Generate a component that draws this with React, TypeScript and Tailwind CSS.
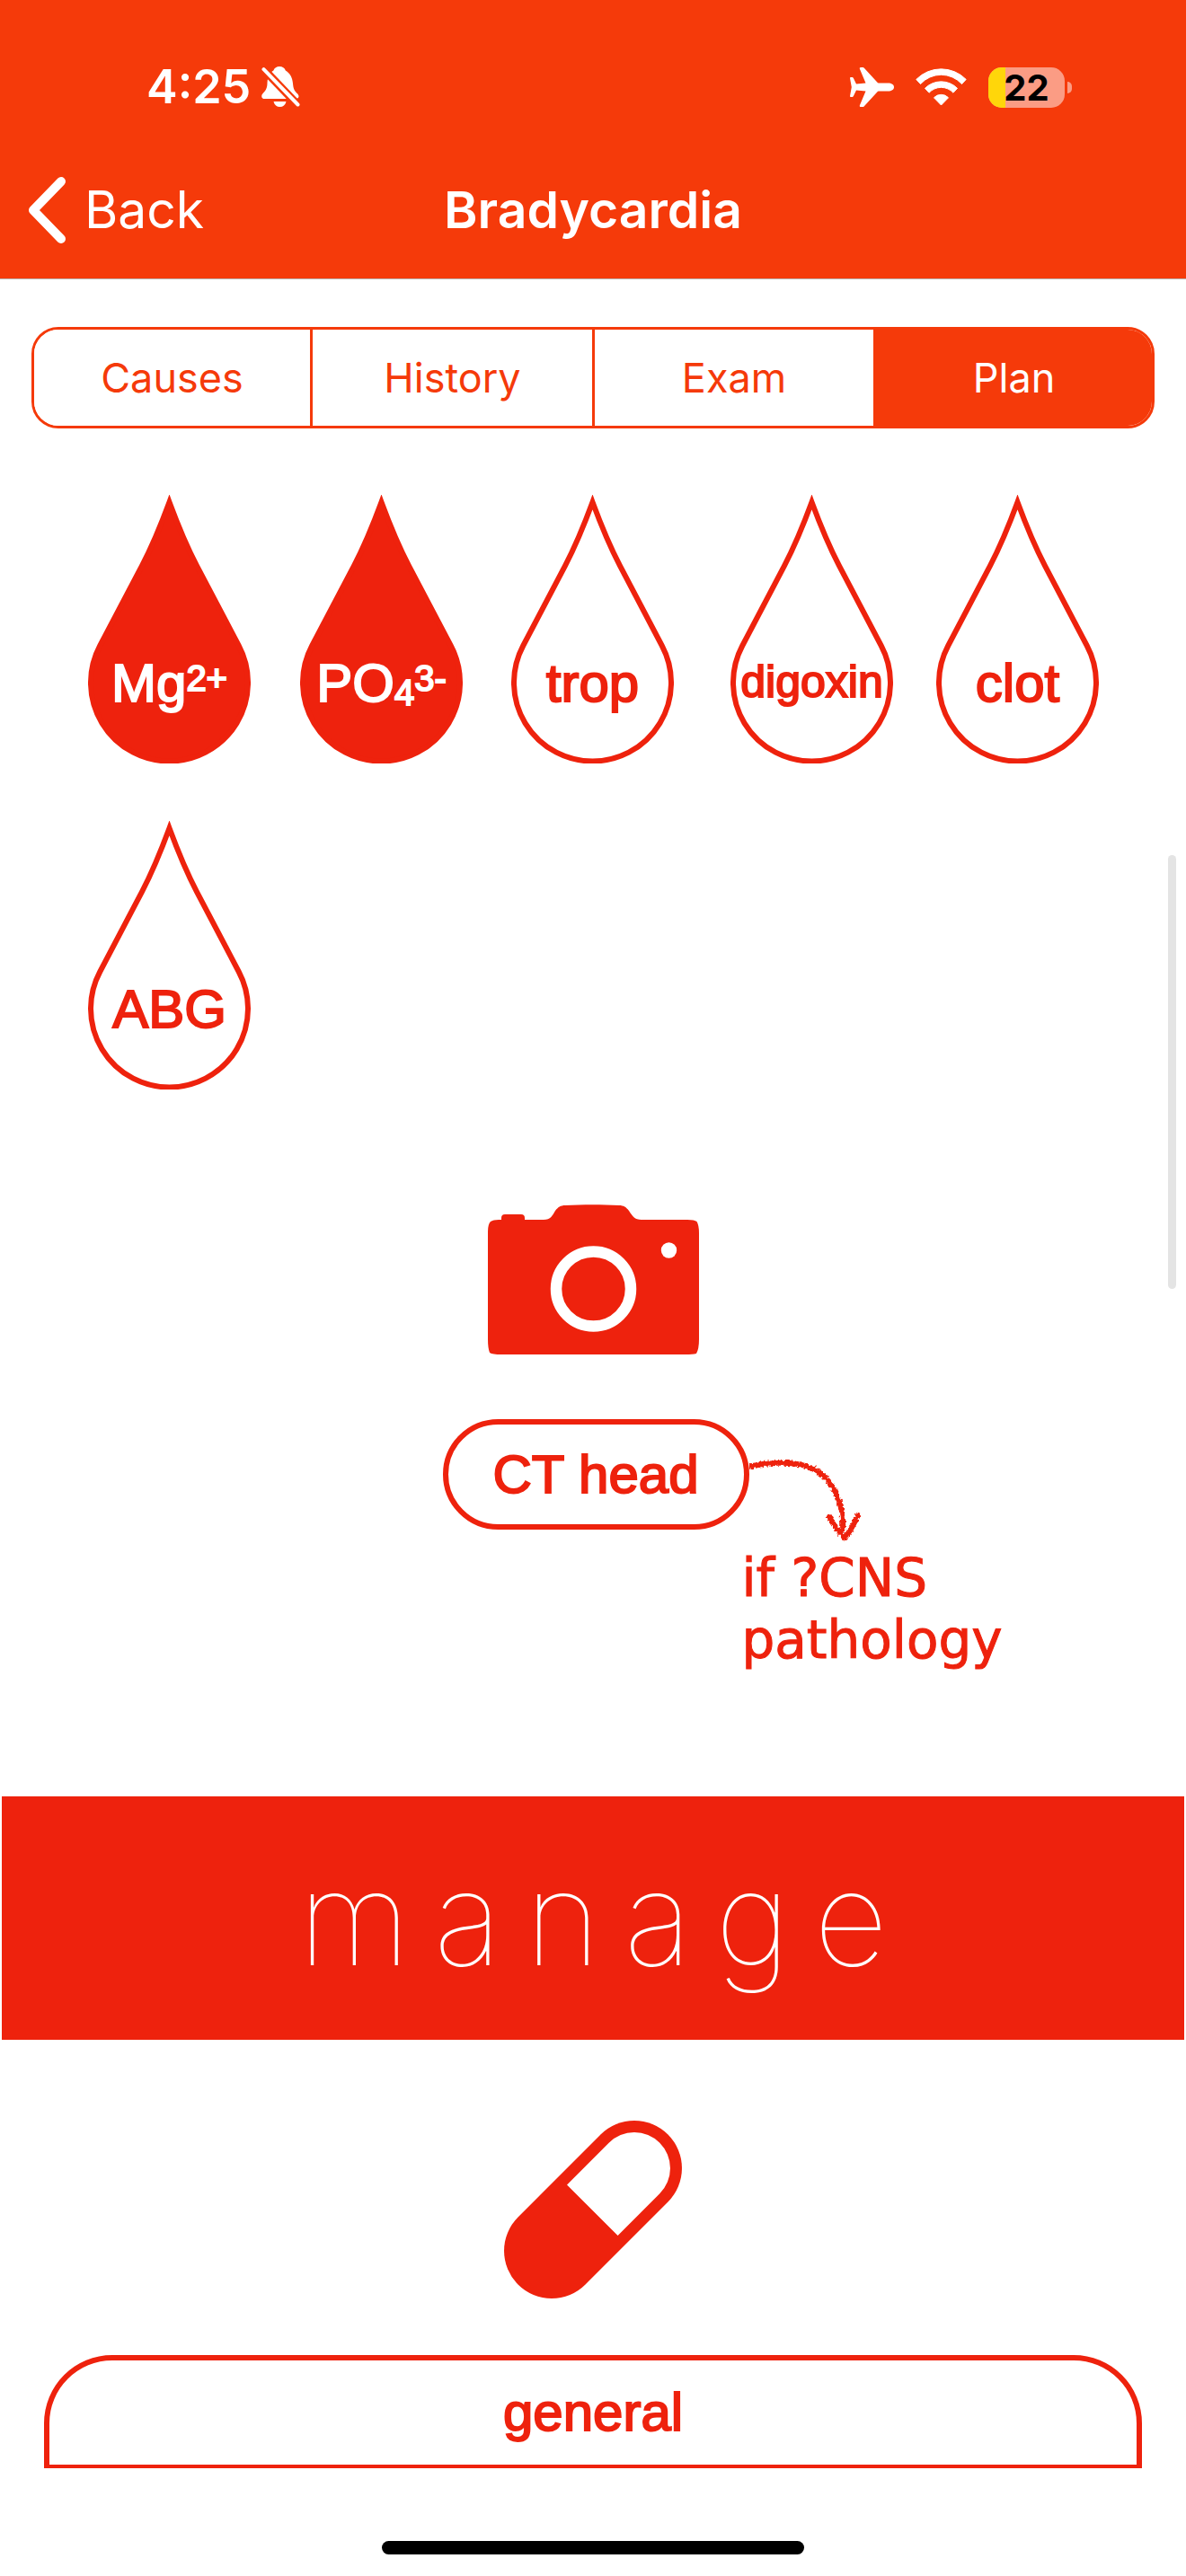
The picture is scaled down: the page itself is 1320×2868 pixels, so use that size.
import { useState, type ReactNode } from "react";

const TABS = ["Causes", "History", "Exam", "Plan"];

type Test = { id: string; label: ReactNode; filled?: boolean; small?: boolean };

const BLOODS: Test[] = [
  {
    id: "magnesium",
    filled: true,
    label: (
      <>
        Mg<span className="relative -top-3 text-[40px]">2+</span>
      </>
    ),
  },
  {
    id: "phosphate",
    filled: true,
    label: (
      <>
        PO<span className="relative top-1 text-[40px]">4</span>
        <span className="relative -top-3 text-[40px]">3-</span>
      </>
    ),
  },
  { id: "troponin", label: "trop" },
  { id: "digoxin", label: "digoxin", small: true },
  { id: "clotting", label: "clot" },
  { id: "abg", label: "ABG" },
];

function BellOff() {
  return (
    <svg width="43" height="46" viewBox="0 0 43 46" aria-label="Silent mode" role="img">
      <path
        fill="#fff"
        d="M20 0c3.4 0 5.800 1.600 6.800 4.600C32 7.500 34.500 13 35 19c.4 6 2 8.500 5.300 11.500 2.400 3 1 5.500-2.300 5.500H3.500c-3.500 0-4.500-3.500-1.500-6.500C5.500 26 6.500 23 6.500 18 7 11.500 9 7 13.400 4.600 14.300 1.600 17 0 20 0Z"
      />
      <path fill="#fff" d="M13.500 39h14c-1 4-3.500 6-7 6s-6-2-7-6Z" />
      <path d="M0 0.500 43 45.500" stroke="#f53a0a" strokeWidth="9" />
      <path d="M2.500 3.200 40.500 42.500" stroke="#fff" strokeWidth="4" strokeLinecap="round" />
    </svg>
  );
}

function Airplane() {
  return (
    <svg width="49" height="44" viewBox="0 0 49 44" aria-label="Airplane mode" role="img">
      <path
        fill="#fff"
        d="M49 22c0 2.800-2.800 4.500-6.500 4.500H32c-.8 0-1.300.4-1.700 1L16.500 42.500c-.8 1-1.500 1.500-2.500 1.500h-2c-1 0-1.500-.7-1.100-1.800L17.500 26.500 7 25.400l-3 6.300c-.4.9-1 1.200-1.800 1.200H.8c-.5 0-.8-.3-.8-.9L1.800 22 0 12c0-.6.300-.9.800-.9h1.400c.8 0 1.400.3 1.800 1.200l3 6.300 10.500-1.100L10.900 1.800C10.500.7 11 0 12 0h2c1 0 1.700.5 2.500 1.500l13.800 15c.4.6.9 1 1.700 1h10.500c3.700 0 6.500 1.700 6.500 4.500Z"
      />
    </svg>
  );
}

function Wifi() {
  return (
    <svg width="57" height="42" viewBox="0 0 57 42" aria-label="Wi-Fi" role="img">
      <g fill="#fff" stroke="#fff" strokeWidth="1" strokeLinejoin="round">
        <path d="M.8 12.400A39 39 0 0 1 56.200 12.400L51.500 17.500A31 31 0 0 0 5.500 17.500Z" />
        <path d="M10.500 22.300A25.500 25.500 0 0 1 46.500 22.300L42 27.200A18.500 18.500 0 0 0 15 27.200Z" />
        <path d="M20.500 32.800A11 11 0 0 1 36.500 32.800L28.500 41Z" />
      </g>
    </svg>
  );
}

function Battery() {
  return (
    <div className="flex items-center gap-[3px]" role="img" aria-label="Battery 22 percent">
      <div className="relative flex h-[45px] w-[85px] items-center justify-center rounded-[15px] bg-[#fb9c84]">
        <div className="absolute inset-y-0 left-0 w-[19px] rounded-l-[15px] bg-[#ffd60a]" />
        <span className="relative text-[40px] leading-[45px] font-bold text-black">22</span>
      </div>
      <div className="h-[13px] w-[5px] rounded-r-full bg-[#fb9c84]" />
    </div>
  );
}

function Drop({ test }: { test: Test }) {
  return (
    <button
      type="button"
      className={test.filled ? "relative w-[181px] text-white" : "relative w-[181px] text-[#ee220d]"}
    >
      <svg width="181" height="299" viewBox="0 0 181 299" aria-hidden="true">
        <path
          d="M90.500 8C97.500 27 108.400 54.800 121 78.800L167.800 168A87.500 87.500 0 1 1 13.200 168L60 78.800C72.600 54.800 83.500 27 90.500 8Z"
          fill={test.filled ? "#ee220d" : "#fff"}
          stroke="#ee220d"
          strokeWidth="6"
          strokeMiterlimit="8"
        />
      </svg>
      <span
        className={
          test.small
            ? "absolute inset-x-0 top-[178px] flex justify-center text-[50px] leading-[60px] whitespace-nowrap [-webkit-text-stroke:2px]"
            : "absolute inset-x-0 top-[180px] flex items-baseline justify-center text-[60px] leading-[60px] whitespace-nowrap [-webkit-text-stroke:2px]"
        }
      >
        {test.label}
      </span>
    </button>
  );
}

function Camera() {
  return (
    <svg width="235" height="167" viewBox="0 0 235 167" aria-hidden="true">
      <path
        fill="#ee220d"
        d="M12 17H15V15Q15 11 19 11H37Q41 11 41 15V17H62C70 17 72 12 75 7 78 3 81 1 86 1 105 0 128 0 146 1 151 1 154 3 157 7 161 13 163 17 171 17H222Q230 17 232.500 19 235 23 235 32V150Q235 161 232 166 228 167 220 167H15Q5 167 2 165 0 160 0 150V30Q0 22 3 19 6 17 12 17Z"
      />
      <circle cx="117.500" cy="94" r="41.500" fill="none" stroke="#fff" strokeWidth="12.500" />
      <circle cx="201.500" cy="51" r="8.700" fill="#fff" />
    </svg>
  );
}

function SketchArrow() {
  return (
    <svg className="ml-2 block" width="130" height="94" viewBox="0 0 130 94" aria-hidden="true">
      <filter id="chalk" x="-10%" y="-10%" width="120%" height="120%">
        <feTurbulence type="fractalNoise" baseFrequency="0.35" numOctaves="2" seed="4" />
        <feDisplacementMap in="SourceGraphic" scale="5" xChannelSelector="R" yChannelSelector="G" />
      </filter>
      <g filter="url(#chalk)" fill="none" stroke="#ee220d" strokeWidth="6" strokeLinecap="round">
        <path d="M-2 8C20 3 45 2 63 7 80 13 92 26 98 41 103 53 105 64 104 78" />
        <path d="M89 64C94 73 99 81 106 87 113 80 116 72 121 62" />
      </g>
    </svg>
  );
}

function Capsule() {
  return (
    <svg width="198" height="198" viewBox="0 0 198 198" aria-hidden="true">
      <g transform="translate(99 99) rotate(-45)">
        <rect x="-118" y="-53" width="236" height="106" rx="53" fill="#ee220d" />
        <path d="M-1 -40H65A40 40 0 0 1 65 40H-1Z" fill="#fff" />
      </g>
    </svg>
  );
}

export default function App() {
  const [tab, setTab] = useState("Plan");

  return (
    <div className="relative flex min-h-screen w-full flex-col bg-white font-['Liberation_Sans',Arial,sans-serif] text-[#ee220d]">
      <header className="border-b border-[#b8b0ae] bg-[#f53a0a] font-[Inter,sans-serif] text-white">
        <div className="flex h-[157px] items-start justify-between pt-[68px] pr-[127px] pl-[163px]">
          <div className="flex h-[58px] items-center gap-3">
            <span className="text-[52px] leading-none font-semibold">4:25</span>
            <BellOff />
          </div>
          <div className="flex h-[58px] items-center gap-6">
            <Airplane />
            <Wifi />
            <Battery />
          </div>
        </div>
        <div className="grid h-[153px] grid-cols-[1fr_auto_1fr] items-center px-[30px]">
          <button type="button" className="flex items-center gap-5 justify-self-start text-[57px] leading-none">
            <svg width="44" height="74" viewBox="0 0 44 74" aria-hidden="true">
              <path
                d="M38 5 7 37 38 69"
                fill="none"
                stroke="#fff"
                strokeWidth="10"
                strokeLinecap="round"
                strokeLinejoin="round"
              />
            </svg>
            Back
          </button>
          <h1 className="text-[57px] leading-none font-semibold">Bradycardia</h1>
        </div>
      </header>

      <main className="flex flex-1 flex-col">
        <div
          role="tablist"
          className="mx-[35px] mt-[53px] grid h-[113px] grid-cols-[310fr_314fr_313fr_307fr] divide-x-[3px] divide-[#f53a0a] overflow-hidden rounded-[30px] border-[3px] border-[#f53a0a] font-[Inter,sans-serif] text-[45px] leading-none"
        >
          {TABS.map((name) => (
            <button
              key={name}
              type="button"
              role="tab"
              aria-selected={tab === name}
              onClick={() => setTab(name)}
              className={tab === name ? "bg-[#f53a0a] text-white" : "bg-white text-[#f53a0a]"}
            >
              {name}
            </button>
          ))}
        </div>

        <section
          aria-label="Blood tests"
          className="mt-[74px] grid grid-cols-[236fr_235fr_244fr_229fr_181fr] gap-y-16 pr-[97px] pl-[98px]"
        >
          {BLOODS.map((test) => (
            <Drop key={test.id} test={test} />
          ))}
        </section>

        <section aria-label="Imaging" className="mt-32 flex flex-col items-center">
          <Camera />
          <div className="mt-[72px] grid w-full grid-cols-[1fr_auto_1fr] items-start pl-[6px]">
            <span />
            <button
              type="button"
              className="h-[123px] w-[341px] rounded-full border-[6px] border-[#ee220d] text-[60px] leading-none [-webkit-text-stroke:2px]"
            >
              CT head
            </button>
            <div className="-ml-2 pt-[45px]">
              <SketchArrow />
              <p className="mt-1 font-['DejaVu_Sans',sans-serif] text-[58px] leading-[69px] [-webkit-text-stroke:1px]">
                if ?CNS
                <br />
                pathology
              </p>
            </div>
          </div>
        </section>

        <h2 className="mx-[2px] mt-[139px] flex h-[271px] items-center justify-center bg-[#ee220d] pl-[26px] font-[Inter,sans-serif] text-[144px] leading-none font-thin tracking-[26px] text-white">
          manage
        </h2>

        <section aria-label="Medication" className="mt-[90px] flex flex-col items-center px-[49px]">
          <Capsule />
          <button
            type="button"
            className="mt-[63px] h-[126px] w-full rounded-t-[76px] border-6 border-b-4 border-[#ee220d] text-[60px] leading-none [-webkit-text-stroke:2px]"
          >
            general
          </button>
        </section>
      </main>

      <div className="mx-auto mt-20 mb-6 h-[15px] w-[470px] rounded-full bg-black" />
      <div className="absolute top-[952px] right-[11px] h-[483px] w-[9px] rounded-full bg-[#e4e4e4]" />
    </div>
  );
}
